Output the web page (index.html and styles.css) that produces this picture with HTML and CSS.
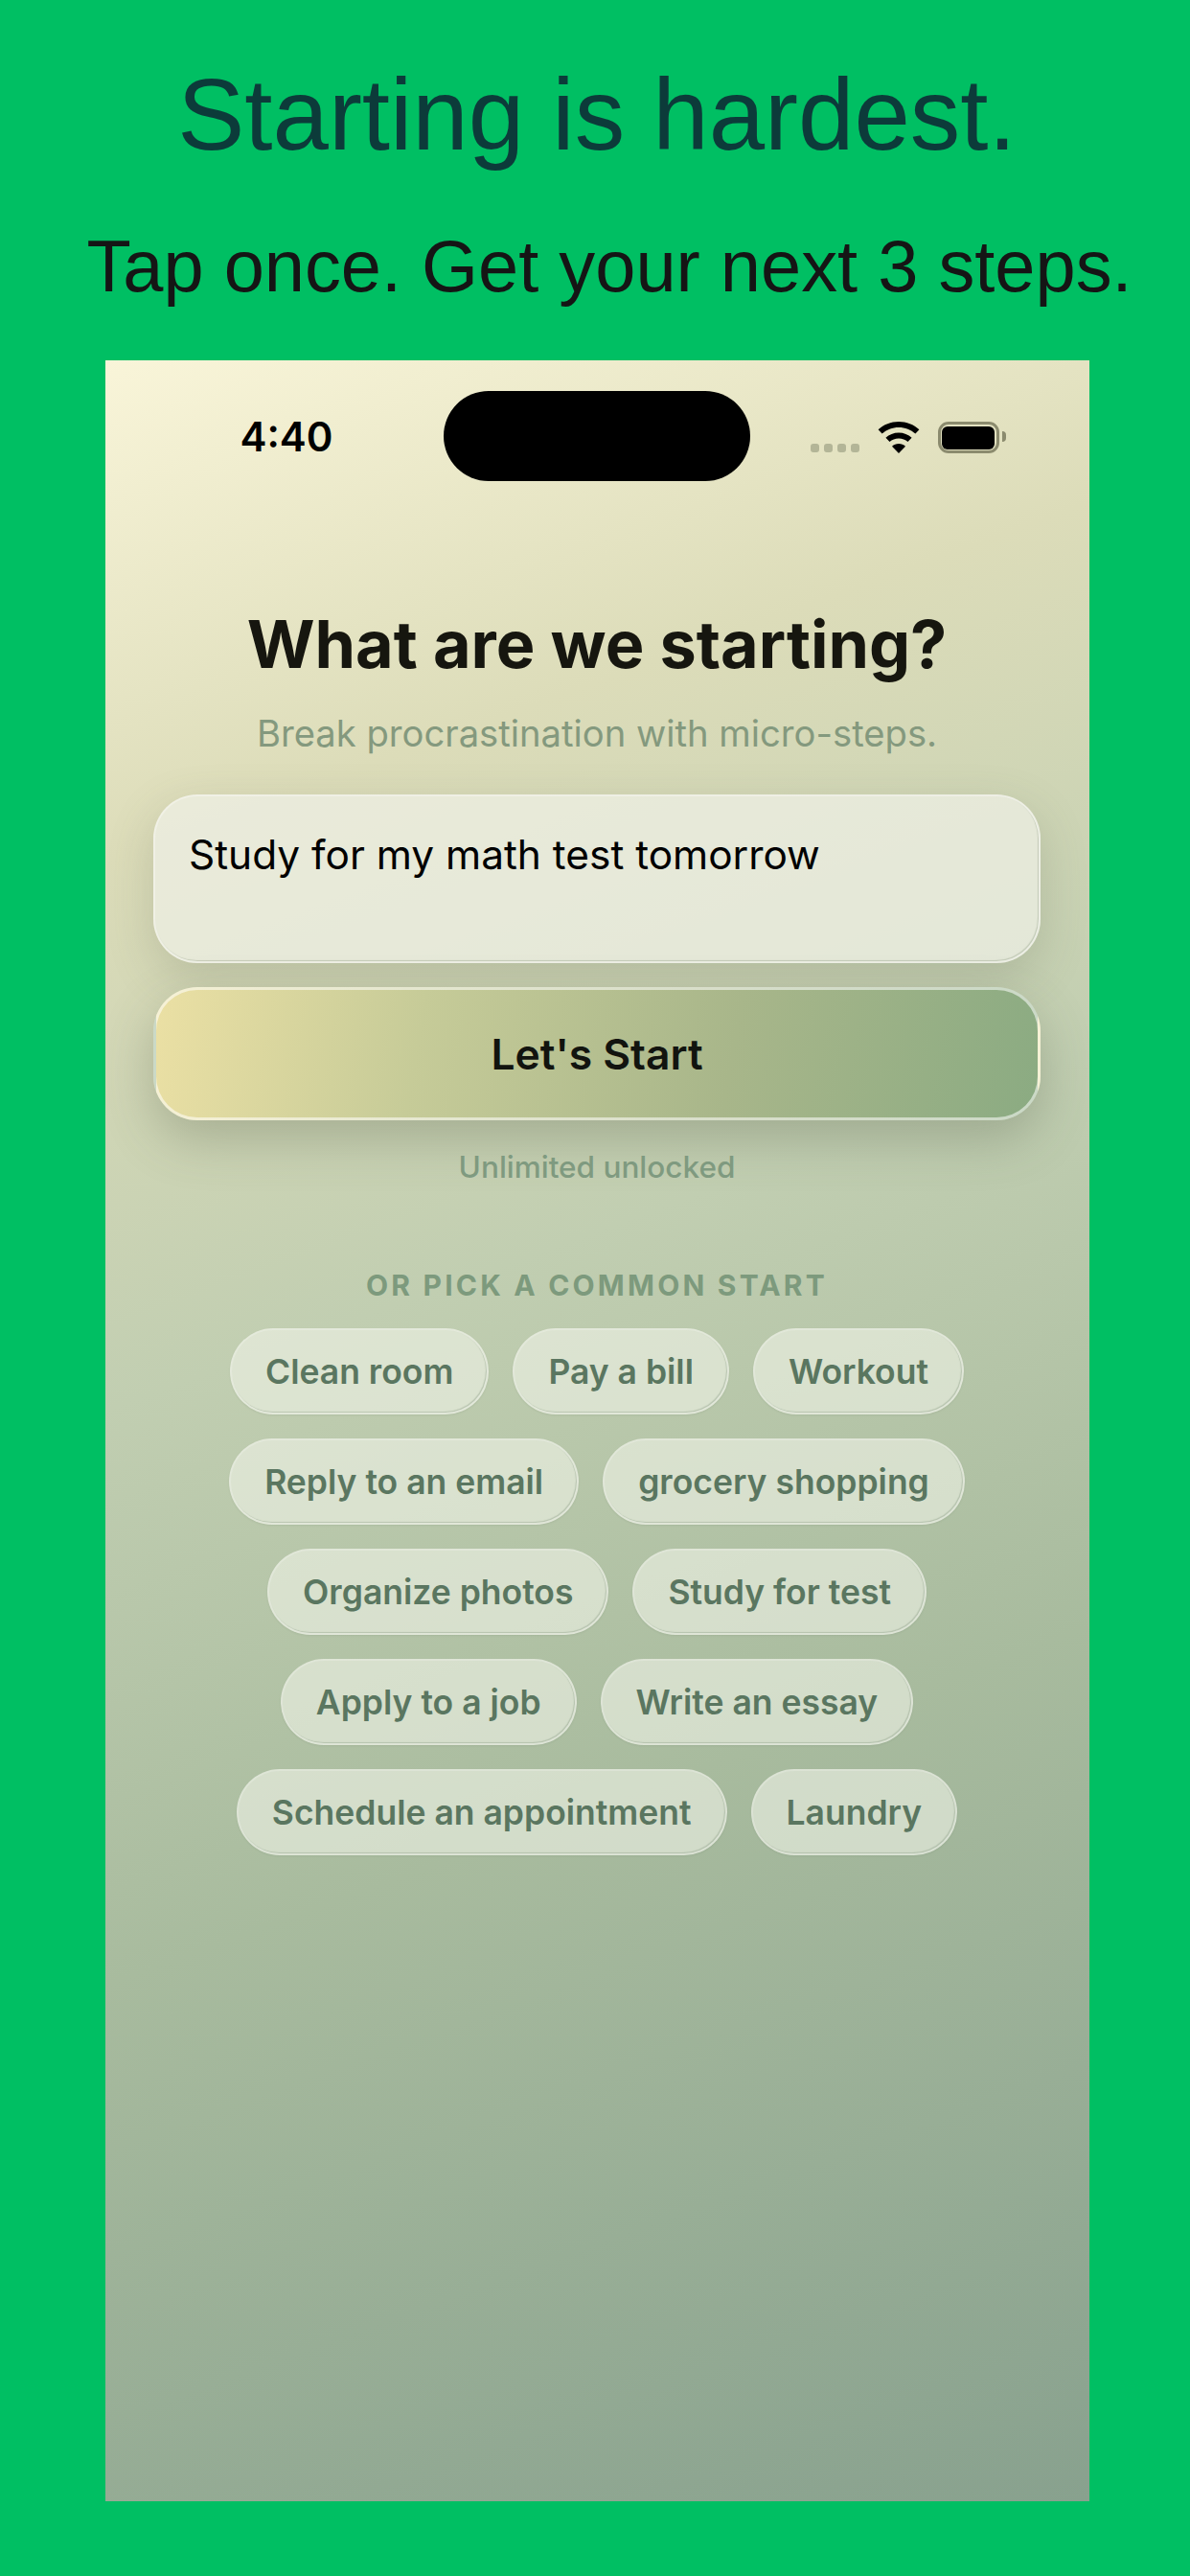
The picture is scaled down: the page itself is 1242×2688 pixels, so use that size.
FILE: index.html
```html
<!DOCTYPE html>
<html lang="en">
<head>
    <meta charset="UTF-8">
    <meta name="viewport" content="width=device-width, initial-scale=1.0">
    <title>Starting is hardest</title>
    <link rel="stylesheet" href="styles.css">
</head>
<body>
    <header class="promo">
        <h1 class="promo-title">Starting is hardest.</h1>
        <p class="promo-sub">Tap once. Get your next 3 steps.</p>
    </header>

    <main class="phone">
        <div class="status-bar">
            <div class="status-left">4:40</div>
            <div class="island"></div>
            <div class="status-right">
                <div class="signal"><span></span><span></span><span></span><span></span></div>
                <svg class="wifi" width="44" height="33" viewBox="0 0 44 33">
                    <path d="M22 0C13.8 0 6.3 3.1 0.6 8.2L4.6 12.6C9.2 8.5 15.3 6 22 6s12.8 2.5 17.4 6.6l4-4.4C37.7 3.1 30.2 0 22 0z"/>
                    <path d="M22 11.5c-5.2 0-10 2-13.6 5.2l4.1 4.4c2.5-2.2 5.8-3.6 9.5-3.6s7 1.4 9.5 3.6l4.1-4.4C32 13.5 27.2 11.5 22 11.5z"/>
                    <path d="M22 23c-2.7 0-5.2 1-7 2.7L22 33l7-7.3C27.2 24 24.7 23 22 23z"/>
                </svg>
                <div class="battery"><div class="battery-fill"></div></div>
            </div>
        </div>

        <section class="content">
            <h2 class="title">What are we starting?</h2>
            <p class="subtitle">Break procrastination with micro-steps.</p>

            <div class="task-input">Study for my math test tomorrow</div>
            <button class="start-button">Let's Start</button>
            <p class="unlocked">Unlimited unlocked</p>

            <p class="section-label">OR PICK A COMMON START</p>
            <div class="chips">
                <button class="chip">Clean room</button>
                <button class="chip">Pay a bill</button>
                <button class="chip">Workout</button>
                <button class="chip">Reply to an email</button>
                <button class="chip">grocery shopping</button>
                <button class="chip">Organize photos</button>
                <button class="chip">Study for test</button>
                <button class="chip">Apply to a job</button>
                <button class="chip">Write an essay</button>
                <button class="chip">Schedule an appointment</button>
                <button class="chip">Laundry</button>
            </div>
        </section>
    </main>
</body>
</html>
```

FILE: styles.css
```css
* {
    box-sizing: border-box;
}

body {
    margin: 0;
    width: 1242px;
    height: 2688px;
    padding-left: 4px;
    overflow: hidden;
    background-color: #00bf63;
    display: flex;
    flex-direction: column;
    align-items: center;
}

.promo {
    height: 376px;
    width: 100%;
    text-align: center;
    font-family: "Liberation Sans", Arial, sans-serif;
}

.promo-title {
    margin: 0;
    padding-top: 60px;
    font-size: 105px;
    line-height: 120px;
    font-weight: 400;
    color: #0c3b3a;
}

.promo-sub {
    margin: 0;
    padding-top: 54px;
    padding-left: 26px;
    font-size: 75.8px;
    line-height: 88px;
    white-space: nowrap;
    color: #151515;
}

.phone {
    width: 1027px;
    height: 2234px;
    background: linear-gradient(160deg, #f9f5d9 0%, #dcdcb9 20%, #c1ceb1 42%, #a8bb9e 65%, #88a18e 100%);
    font-family: Inter, "Liberation Sans", sans-serif;
}

.status-bar {
    display: grid;
    grid-template-columns: 1fr 320px 1fr;
    padding-top: 32px;
}

.status-left {
    padding-left: 141px;
    font-size: 42px;
    font-weight: 600;
    line-height: 96px;
    color: #000;
}

.island {
    height: 94px;
    border-radius: 47px;
    background-color: #000;
}

.status-right {
    display: flex;
    align-items: flex-end;
    justify-content: flex-end;
    gap: 19px;
    padding-right: 94px;
    padding-bottom: 31px;
}

.signal {
    display: flex;
    gap: 5px;
    padding-bottom: 1px;
}

.signal span {
    width: 9px;
    height: 9px;
    border-radius: 3px;
    background-color: #b3b597;
}

.wifi {
    display: block;
    fill: #000;
}

.battery {
    position: relative;
    width: 64px;
    height: 33px;
    padding: 1.5px;
    border: 3px solid #8b8b6e;
    border-radius: 11px;
}

.battery::after {
    content: "";
    position: absolute;
    top: 7px;
    right: -10px;
    width: 4px;
    height: 11px;
    border-radius: 0 4px 4px 0;
    background-color: #8b8b6e;
}

.battery-fill {
    height: 100%;
    border-radius: 6px;
    background-color: #000;
}

.content {
    display: flex;
    flex-direction: column;
    align-items: center;
    padding: 0 50px;
}

.title {
    margin: 126px 0 0;
    font-size: 68.3px;
    line-height: 84px;
    font-weight: 700;
    color: #16160f;
}

.subtitle {
    margin: 27px 0 0;
    font-size: 38.2px;
    line-height: 48px;
    color: #84997e;
}

.task-input {
    width: 926px;
    height: 176px;
    margin-top: 40px;
    padding: 35px 35px 0;
    font-size: 42.4px;
    line-height: 52px;
    color: #000;
    background: rgba(238, 240, 230, 0.72);
    border: 2px solid rgba(255, 255, 255, 0.3);
    border-radius: 46px;
    box-shadow: 0 16px 48px rgba(90, 100, 80, 0.22), inset -1px -1px 1px rgba(120, 135, 110, 0.3);
}

.start-button {
    width: 926px;
    height: 139px;
    margin-top: 25px;
    padding: 0;
    font-family: inherit;
    font-size: 44.4px;
    font-weight: 600;
    color: #12140f;
    background: linear-gradient(100deg, #ebe0a4 0%, #c6cb98 30%, #a8b68a 65%, #8bab82 100%);
    border: 3px solid rgba(255, 255, 255, 0.55);
    border-radius: 46px;
    box-shadow: 0 20px 52px rgba(80, 90, 70, 0.3);
}

.unlocked {
    margin: 29px 0 0;
    font-size: 31.5px;
    line-height: 40px;
    font-weight: 500;
    color: #7f9a80;
}

.section-label {
    margin: 83px 0 0;
    font-size: 30px;
    line-height: 40px;
    font-weight: 700;
    letter-spacing: 3.2px;
    color: #7d9a7d;
}

.chips {
    display: flex;
    flex-wrap: wrap;
    justify-content: center;
    gap: 25px;
    width: 800px;
    margin-top: 25px;
}

.chip {
    height: 90px;
    padding: 0 35px;
    font-family: inherit;
    font-size: 35.5px;
    font-weight: 600;
    color: #5a7660;
    background: rgba(240, 244, 232, 0.6);
    border: 2px solid rgba(255, 255, 255, 0.2);
    border-radius: 45px;
    box-shadow: inset -1px -1px 1px rgba(110, 130, 105, 0.3), 0 1px 2px rgba(80, 100, 80, 0.1);
}
```
